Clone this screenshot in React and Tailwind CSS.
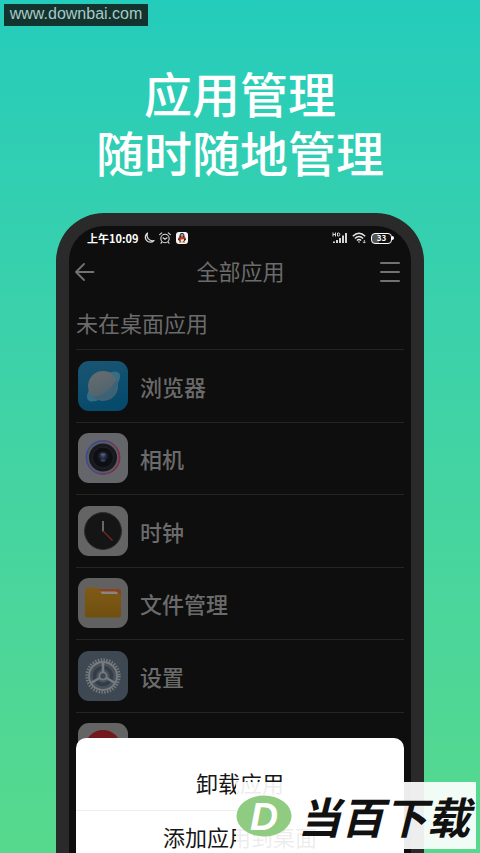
import React from "react";

function BrowserIcon() {
  return (
    <svg viewBox="0 0 50 50" className="size-full" aria-hidden="true">
      <defs>
        <linearGradient id="browserBg" x1="0" y1="0" x2="0.3" y2="1">
          <stop offset="0" stopColor="#1a5672" />
          <stop offset="1" stopColor="#064a6c" />
        </linearGradient>
        <linearGradient id="planet" x1="0.3" y1="0" x2="0.7" y2="1">
          <stop offset="0" stopColor="#666c70" />
          <stop offset="1" stopColor="#4a616d" />
        </linearGradient>
      </defs>
      <rect width="50" height="50" rx="11" fill="url(#browserBg)" />
      <ellipse cx="25.5" cy="25.5" rx="20.5" ry="9" transform="rotate(-41 25.5 25.5)" fill="#376d87" />
      <circle cx="25" cy="25" r="15" fill="url(#planet)" />
      <path d="M38.5 18 C35 26 24 36.5 14.5 36 C25 43 39.5 36 40 25 C40 22.500 39.500 20 38.500 18Z" fill="#2b627d" opacity="0.55" />
    </svg>
  );
}

function CameraIcon() {
  return (
    <svg viewBox="0 0 50 50" className="size-full" aria-hidden="true">
      <defs>
        <linearGradient id="cameraRing" x1="0" y1="0.3" x2="1" y2="0.6">
          <stop offset="0" stopColor="#344e8d" />
          <stop offset="0.5" stopColor="#574080" />
          <stop offset="1" stopColor="#85273f" />
        </linearGradient>
        <radialGradient id="lens" cx="0.5" cy="0.35">
          <stop offset="0" stopColor="#4a5068" />
          <stop offset="0.5" stopColor="#242b3c" />
          <stop offset="1" stopColor="#0d1018" />
        </radialGradient>
      </defs>
      <rect width="50" height="50" rx="11" fill="#65666a" />
      <circle cx="25" cy="24.500" r="16.600" fill="#5b5c62" stroke="url(#cameraRing)" strokeWidth="1.600" />
      <circle cx="25" cy="24.500" r="14" fill="#17191e" />
      <circle cx="25" cy="24.500" r="10.500" fill="#0d0f13" stroke="#22252b" strokeWidth="1" />
      <circle cx="25" cy="24.500" r="6" fill="url(#lens)" />
      <ellipse cx="25" cy="21.500" rx="2.400" ry="1.100" fill="#5a6076" />
      <ellipse cx="25" cy="27.500" rx="2.400" ry="1.200" fill="#36425f" />
    </svg>
  );
}

function ClockIcon() {
  return (
    <svg viewBox="0 0 50 50" className="size-full" aria-hidden="true">
      <rect width="50" height="50" rx="11" fill="#646464" />
      <circle cx="25" cy="25" r="18.500" fill="#151515" stroke="#2d2d2d" strokeWidth="1" />
      <path d="M25 15v10.500" stroke="#858585" strokeWidth="1.500" />
      <path d="M25 25l9.500 9.500" stroke="#7b2a26" strokeWidth="1.100" />
    </svg>
  );
}

function FilesIcon() {
  return (
    <svg viewBox="0 0 50 50" className="size-full" aria-hidden="true">
      <defs>
        <linearGradient id="folder" x1="0" y1="0" x2="0" y2="1">
          <stop offset="0" stopColor="#805a16" />
          <stop offset="1" stopColor="#70500f" />
        </linearGradient>
      </defs>
      <rect width="50" height="50" rx="11" fill="#616161" />
      <path d="M19 11h21a3 3 0 0 1 3 3v8H19z" fill="#8b421d" />
      <path d="M20 13.500h17a3 3 0 0 1 3 3v3H20z" fill="#898785" />
      <path d="M7 12a2.500 2.500 0 0 1 2.500-2.500h9q1.500 0 2.300 1.500l2 3.500q.8 1.500 2.200 1.500h15.500A2.500 2.500 0 0 1 43 18.500V37a2.500 2.500 0 0 1-2.500 2.500h-31A2.500 2.500 0 0 1 7 37z" fill="url(#folder)" />
    </svg>
  );
}

function SettingsIcon() {
  return (
    <svg viewBox="0 0 50 50" className="size-full" aria-hidden="true">
      <rect width="50" height="50" rx="11" fill="#3e4852" />
      <circle cx="25" cy="25" r="14" fill="#46515b" />
      <circle cx="25" cy="25" r="16.200" fill="none" stroke="#777b7e" strokeWidth="3" strokeDasharray="1.413 1.414" />
      <circle cx="25" cy="25" r="14" fill="none" stroke="#777b7e" strokeWidth="2" />
      <circle cx="25" cy="25" r="8.500" fill="none" stroke="#323d47" strokeWidth="3.500" />
      <g stroke="#777b7e" strokeWidth="2.600">
        <path d="M25 21V11M21.500 27L13 32M28.500 27L37 32" />
      </g>
      <circle cx="25" cy="25" r="3.600" fill="#3e4852" stroke="#777b7e" strokeWidth="1.800" />
    </svg>
  );
}

function RedAppIcon() {
  return (
    <svg viewBox="0 0 50 50" className="size-full" aria-hidden="true">
      <rect width="50" height="50" rx="11" fill="#646464" />
      <circle cx="25" cy="25" r="18" fill="#73191b" />
    </svg>
  );
}

const apps = [
  { name: "浏览器", Icon: BrowserIcon },
  { name: "相机", Icon: CameraIcon },
  { name: "时钟", Icon: ClockIcon },
  { name: "文件管理", Icon: FilesIcon },
  { name: "设置", Icon: SettingsIcon },
  { name: "", Icon: RedAppIcon },
];

function StatusBar() {
  return (
    <div className="flex h-6 items-center justify-between pr-[17px] pl-[18px] text-white">
      <div className="flex items-center gap-1">
        <span className="text-[11px] leading-4 font-bold">上午10:09</span>
        <svg viewBox="0 0 12 12" className="size-3" fill="none" stroke="#ddd" strokeWidth="1.200" aria-hidden="true">
          <path d="M4.500 1A5 5 0 1 0 11 8.500A5.500 5.500 0 0 1 4.500 1Z" strokeLinejoin="round" />
        </svg>
        <svg viewBox="0 0 12 12" className="size-3" fill="none" stroke="#ddd" strokeWidth="1.100" strokeLinecap="round" aria-hidden="true">
          <circle cx="6" cy="6.500" r="4.200" />
          <path d="M.7 2.700l2-1.800M11.300 2.700l-2-1.800M2.800 10.200l-.8 1M9.200 10.200l.8 1M4 5.800L6 7.300l2-1.500" />
        </svg>
        <svg viewBox="0 0 12 12" className="ml-px size-3" aria-hidden="true">
          <rect width="12" height="12" rx="3" fill="#f4f4f4" />
          <path d="M6 1C3.800 1 3.400 3 3.500 4.500C2 6.200 1.800 8 2.200 8.400L3 7.800C3 9 3.500 9.600 4 10h4c.5-.4 1-1 1-2.200l.8.6c.4-.4.2-2.200-1.300-3.900C8.600 3 8.200 1 6 1Z" fill="#222" />
          <ellipse cx="6" cy="7.800" rx="2" ry="2.300" fill="#eee" />
          <circle cx="5.200" cy="3" r=".7" fill="#fff" />
          <circle cx="6.800" cy="3" r=".7" fill="#fff" />
          <path d="M4.500 4h3L6 5z" fill="#f2a51f" />
          <path d="M3 4.900q3 1.600 6 0v1.700q-2 1.200-4.200.8v1.600H3.400V6.500z" fill="#e22c22" />
          <path d="M3 10.500h2.500M6.500 10.500H9" stroke="#ef9a1c" strokeWidth="1" />
        </svg>
      </div>
      <div className="flex items-center gap-1">
        <svg viewBox="0 0 16 12" className="h-3 w-4" fill="none" stroke="#e8e8e8" aria-hidden="true">
          <path d="M1 .5v4M3.500 .5v4M1 2.500h2.500M5.500 1h1q1.300 0 1.300 1.500T6.500 4h-1z" strokeWidth=".9" />
          <path d="M2 11V9.500M5 11V8M8 11V6M11 11V3.500M14 11V1" strokeWidth="1.800" />
        </svg>
        <svg viewBox="0 0 15 12" className="h-3 w-[15px]" fill="none" stroke="#e8e8e8" strokeWidth="1.400" aria-hidden="true">
          <path d="M.8 4.200Q7 -1.800 13.200 4.200M2.900 6.400Q7 2.400 11.100 6.400M4.900 8.400Q7 6.500 9.100 8.400" />
          <circle cx="7" cy="10" r=".8" fill="#e8e8e8" stroke="none" />
          <path d="M12.300 8v3M11 9.800l1.300 1.300 1.300-1.300" strokeWidth=".8" />
        </svg>
        <span className="flex items-center">
          <span className="flex h-[11px] w-[21px] items-center justify-center rounded border border-white bg-linear-to-r from-[#555] from-35% to-[#111] to-35% text-[8px] leading-none font-bold">
            33
          </span>
          <span className="h-1 w-0.5 rounded-r bg-white" />
        </span>
      </div>
    </div>
  );
}

function Phone() {
  return (
    <main className="relative mx-auto flex min-h-0 w-92 max-w-[90%] flex-1 flex-col rounded-t-[48px] border-x-[13px] border-t-[13px] border-[#2a2a2a] bg-[#0e0e0e] text-[#6b6b6b]">
      <StatusBar />
      <header className="flex h-11 items-center justify-between pr-[11px] pl-1.5">
        <button type="button" aria-label="返回" className="flex size-5 items-center">
          <svg viewBox="0 0 20 20" className="size-5" fill="none" stroke="#727272" strokeWidth="1.800" strokeLinecap="round" strokeLinejoin="round" aria-hidden="true">
            <path d="M9 2L1 10l8 8M1 10h17.500" />
          </svg>
        </button>
        <h2 className="pb-1 pl-1.5 text-[22px] leading-8">全部应用</h2>
        <button type="button" aria-label="菜单" className="flex w-5 flex-col gap-[7px]">
          <span className="h-0.5 rounded-full bg-[#727272]" />
          <span className="h-0.5 rounded-full bg-[#727272]" />
          <span className="h-0.5 rounded-full bg-[#727272]" />
        </button>
      </header>
      <section className="min-h-0 flex-1 overflow-hidden px-[7px]">
        <h3 className="flex h-[55px] items-center text-[22px] leading-8">未在桌面应用</h3>
        <ul className="grid h-[435px] grid-rows-6">
          {apps.map(({ name, Icon }) => (
            <li key={name} className="flex items-center gap-3 border-t border-[#242424] pl-0.5">
              <span className="size-[50px]">
                <Icon />
              </span>
              <span className="text-[22px] leading-8 font-medium">{name}</span>
            </li>
          ))}
        </ul>
      </section>
      <div role="dialog" aria-label="应用操作" className="absolute inset-x-[7px] bottom-0 h-[115px] overflow-hidden rounded-t-[10px] bg-white text-[22px] text-[#161616]">
        <button type="button" className="flex h-[73px] w-full items-center justify-center border-b border-[#ececec] pt-4 leading-8">
          卸载应用
        </button>
        <button type="button" className="flex h-[50px] w-full items-center justify-center leading-8">
          添加应用到桌面
        </button>
      </div>
    </main>
  );
}

export default function App() {
  return (
    <div className="relative flex h-screen flex-col overflow-hidden bg-linear-to-b from-[#24ccbb] to-[#56d98c] font-['Noto_Sans_CJK_SC',sans-serif]">
      <div className="absolute top-1 left-1 flex h-[22px] w-36 items-center justify-center bg-[#13332f] pb-0.5 font-['Liberation_Sans',Arial,sans-serif] text-[16px] leading-none text-[#a9c9c5]">
        www.downbai.com
      </div>
      <h1 className="pt-[63px] pb-8 text-center text-[48px] leading-[59px] font-medium text-white">
        应用管理
        <br />
        随时随地管理
      </h1>
      <Phone />
      <div className="absolute right-1 bottom-1 flex h-[67px] w-60 items-center gap-1.5 bg-white/92">
        <svg viewBox="0 0 56 42" className="h-[42px] w-14 shrink-0" aria-hidden="true">
          <ellipse cx="28" cy="21" rx="27.500" ry="20.500" fill="#8fcb80" />
          <text x="28" y="35" textAnchor="middle" fontFamily="Liberation Sans, Arial, sans-serif" fontWeight="700" fontStyle="italic" fontSize="39" fill="#fff">
            D
          </text>
        </svg>
        <span className="text-[43px] leading-none font-bold whitespace-nowrap text-[#111] italic">当百下载</span>
      </div>
    </div>
  );
}
